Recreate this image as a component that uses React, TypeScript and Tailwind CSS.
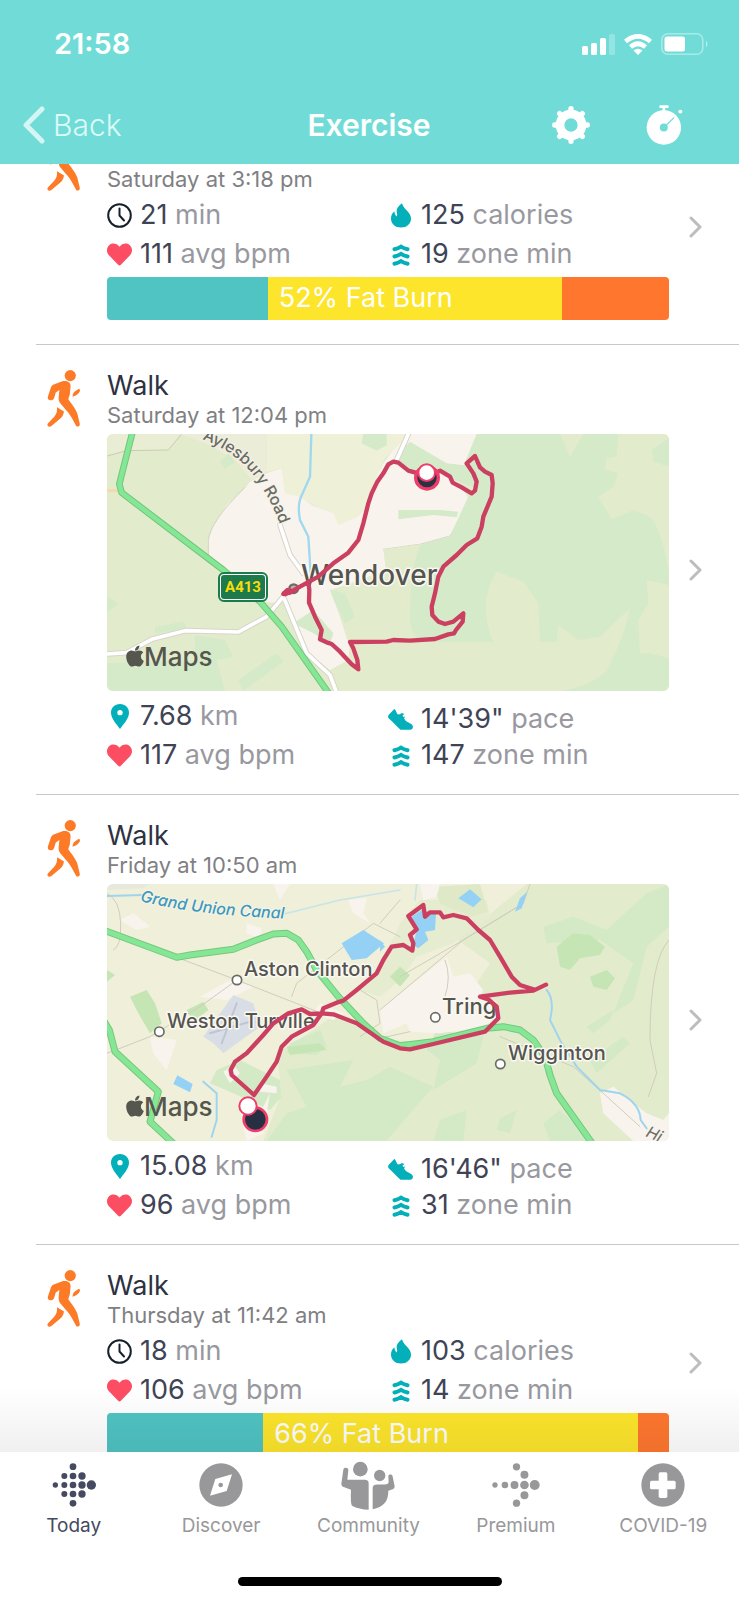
import React, { useLayoutEffect, useRef } from 'react';
import { FaApple, FaHeart } from 'react-icons/fa';

type Zone = { color: string; share: number; label?: string };

type Activity = {
  id: string;
  title: string;
  date: string;
  duration?: string;
  calories?: string;
  distance?: string;
  pace?: string;
  bpm: string;
  zoneMin: string;
  zones?: Zone[];
  map?: React.FC;
};

const Label: React.FC<{ x: number; y: number; size: number; children: string }> = ({ x, y, size, children }) => (
  <text
    x={x}
    y={y}
    fontSize={size}
    fontWeight={500}
    fill="#55554f"
    stroke="#faf8f2"
    strokeWidth={3}
    strokeLinejoin="round"
    paintOrder="stroke"
  >
    {children}
  </text>
);

const MapsMark = () => (
  <g fill="#55564e">
    <FaApple x={16} y={210} size={24} color="#55564e" />
    <text x={37} y={232} fontSize={26} fontWeight={500}>Maps</text>
  </g>
);

const WendoverMap: React.FC = () => (
  <svg viewBox="0 0 562 257" className="block h-auto w-full rounded-md" role="img" aria-label="Route around Wendover">
    <g transform="translate(-7 -4) scale(0.33333)" fill="none" strokeLinejoin="round" strokeLinecap="round">
      <path fill="#e3ebcd" d="M0 0H1720V800H0z" />
      <path fill="#e9edd3" d="M21 12H240L205 60 80 62 21 75z" />
      <path stroke="#c9ccb2" strokeWidth={3} d="M245 12 205 60 80 62 21 78" />
      <path fill="#eef0d8" d="M500 12H930L850 90 815 190 800 230 770 262 715 285 700 255 650 230 600 200 555 190 545 115 500 125z" />
      <path fill="#f1efdf" d="M240 12H500V125L455 150 410 95 330 45z" opacity={0.6} />
      <path fill="#d5eac8" d="M790 12H860V45L830 62 785 40zM385 70 405 95 375 118 360 95zM21 500 55 520 21 550z" />
      <path fill="#f8f4ed" d="M450 155 500 130 545 115 555 190 600 200 640 228 700 250 715 285 770 262 805 228 820 160 850 100 880 60 930 12H1130L1092 106 1045 108 1105 205 1080 260 1050 318 975 347 850 358 858 420 700 480 720 560 745 640 700 600 640 615 560 520 480 515 370 420 328 378 325 330 340 290 380 225 430 180z" />
      <path fill="#f8f4ed" d="M560 510 690 540 715 600 750 640 745 690 690 720 610 660z" />
      <path stroke="#d6d3c4" strokeWidth={3} d="M435 172Q330 275 325 330V380M850 358 965 342 1050 318 1080 270" />
      <path fill="#e3ebcd" d="M850 358 965 342 960 440 930 620 750 640 690 480 860 425zM750 636 1240 636 1240 783H765L775 700z" />
      <path fill="#d5eac8" d="M690 480 735 490 765 560 735 580 710 530zM580 580 640 540 700 610 690 640 640 610zM165 590 250 575 265 600 165 610zM285 615 375 630 400 680 350 690 375 783H21V700L285 690zM415 750 530 670 550 695 430 783z" />
      <path fill="#d5eac8" d="M930 35 1040 100 1092 106 1130 12H1707V783H1380Q1490 760 1520 720L1240 636H1000Q930 640 930 560 930 420 960 345L1050 318 1100 210 1120 170 1060 150 1020 120 950 130 880 95 905 60z" />
      <path fill="#d5eac8" d="M895 240H1020L1075 245 1070 262 1000 255 895 268z" />
      <path fill="#e3ebcd" d="M1380 12H1450L1410 80zM1555 12H1707V430Q1680 270 1640 255L1600 240 1535 268 1495 200 1540 170 1555 130 1515 120 1520 85 1550 80zM1190 425 1270 455 1315 520 1320 636H1370L1375 585 1435 630 1500 620 1590 535Q1570 630 1525 710 1480 770 1380 783H990L980 636 1180 636Q1130 520 1190 425zM1640 450 1707 465V685L1650 670 1620 670 1615 570 1645 520z" />
      <path fill="#d5eac8" d="M1655 60 1707 25V110L1660 95z" />
      <path stroke="#9fd8ef" strokeWidth={7} d="M634 12 630 140 608 190Q590 220 600 270L625 320 632 430" />
      <path stroke="#d8d5ca" strokeWidth={17} d="M21 672 80 668 155 628 255 602 415 606 500 560 550 500 620 670 690 735 708 783M540 285 570 375 610 430M925 12 890 90" />
      <path stroke="#fff" strokeWidth={11} d="M21 672 80 668 155 628 255 602 415 606 500 560 550 500 620 670 690 735 708 783M540 285 570 375 610 430M925 12 890 90" />
      <path stroke="#f3d9ae" strokeWidth={10} d="M21 182H55" />
      <path stroke="#74c57c" strokeWidth={20} d="M97 8 58 162 65 188 370 420 480 515 545 590 690 795" />
      <path stroke="#83e795" strokeWidth={14} d="M97 8 58 162 65 188 370 420 480 515 545 590 690 795" />
      <path stroke="#6b6b66" fill="#c9a8a8" strokeWidth={7} d="M568 476a13 13 0 1 0 26 0a13 13 0 1 0-26 0" />
    </g>
    <Label x={194} y={151} size={28}>Wendover</Label>
    <path id="aylesbury" fill="none" d="M95 5Q129 18 147 42T175 96" />
    <text fontSize={16} fontWeight={500} fill="#6b6b66" stroke="#f4f2e6" strokeWidth={2} paintOrder="stroke">
      <textPath href="#aylesbury">Aylesbury Road</textPath>
    </text>
    <rect x={112} y={139} width={48} height={28} rx={5} fill="#fff" stroke="#1d7a4a" strokeWidth={2} />
    <rect x={114} y={141} width={44} height={24} rx={3} fill="#1d7a4a" />
    <text x={136} y={158} fontSize={15} fontWeight={700} fill="#fbdc0c" textAnchor="middle" fontFamily="Roboto, sans-serif">A413</text>
    <MapsMark />
    <g transform="translate(-7 -4) scale(0.33333)" fill="none" strokeLinejoin="round" strokeLinecap="round">
      <path
        stroke="#cb4060"
        strokeWidth={13}
        d="M550 492 562 480 570 488 600 470 655 440 700 400 745 368 775 330 790 280 805 220 815 190 832 155 850 130 865 103 880 95 895 98 925 122 955 130 980 140 1020 122 1050 140 1058 158 1085 172 1115 190 1125 182 1130 155 1120 130 1100 100 1125 78 1140 112 1155 125 1175 135 1178 160 1175 200 1150 260 1145 290 1132 325 1100 345 1070 375 1030 410 1015 440 1005 490 995 530 997 555 1015 575 1035 582 1060 575 1090 550 1088 575 1068 600 1062 610 1045 613 1005 627 930 632 880 630 860 635 750 636 760 655 772 690 775 718 755 703 720 665 695 642 680 637 660 628 665 600 645 560 627 518 628 480 625 455"
      />
      <path stroke="#cb4060" strokeWidth={18} d="M556 490 570 484" />
      <circle cx={981} cy={143} r={34} fill="#2b3142" stroke="#ee3d6b" strokeWidth={10} />
      <circle cx={980} cy={128} r={25} fill="#fff" stroke="#ee3d6b" strokeWidth={6} />
    </g>
  </svg>
);

const TringMap: React.FC = () => (
  <svg viewBox="0 0 562 257" className="block h-auto w-full rounded-md" role="img" aria-label="Route around Tring">
    <g transform="translate(-7 -4) scale(0.33333)" fill="none" strokeLinejoin="round" strokeLinecap="round">
      <path fill="#f0f0da" d="M0 0H1720V800H0z" />
      <path fill="#e3ebcd" d="M1280 12H1707V783H490L545 640 530 520 640 450 700 405 860 480 1000 485 1160 440 1110 340 1170 250 1060 170 1160 110z" />
      <path fill="#e6ecd0" d="M900 130 960 60 1160 60 1170 110 1060 190 950 230 900 300 840 350 780 330 850 240z" />
      <path fill="#dfe9c8" d="M1000 20 1140 12 1165 95 1110 110 1020 70z" />
      <path fill="#d4e9c6" d="M570 490 660 450 680 500 650 525 560 520zM560 570 760 540 720 620 800 600 870 560 1000 620 930 700 860 783H500L560 700 620 680zM350 570 420 540 540 600 545 650 510 690 400 640 330 610zM1010 450 1150 470 1130 550 1000 630 1020 540 980 510zM1330 140 1420 110 1520 150 1640 40 1707 12V140L1640 200 1600 360 1540 400 1600 250 1500 180 1340 190zM860 660 940 620 910 700 860 720zM1200 715 1250 690 1230 760 1190 750zM1330 730 1380 690 1480 783H1350zM1020 720 1100 690 1090 783H1000zM1470 540 1570 470 1590 490 1490 580zM1460 440 1540 390 1530 420 1480 460z" />
      <path fill="#c5e5b5" d="M1370 200 1420 160 1470 165 1515 200 1500 225 1440 235 1410 270 1380 260zM90 350 140 330 165 370 185 430 150 460 115 400zM260 390 310 365 325 390 280 425zM870 290 900 260 930 285 900 320zM21 270 45 285 21 305zM560 500 660 490 680 510 570 525zM1470 290 1520 270 1545 295 1520 330 1480 320z" />
      <path fill="#f8f4ed" d="M840 390 1040 230 1060 290 1110 280 1150 330 1140 350 1200 400 1155 440 1020 460 930 455 920 430 850 460zM960 12H1020L1010 50 970 60zM745 60 800 55 790 100 810 130 760 100zM1500 640 1540 620 1640 700 1690 720 1707 700V783H1600L1510 700zM300 350 390 300 460 320 380 360zM400 555 420 580 390 610 370 575zM480 610 530 620 530 640 480 635zM150 470 230 480 200 570 160 520zM420 690 480 700 510 640 490 760 440 783zM440 130 485 145 480 175 440 160zM60 120 100 100 150 140 110 150zM660 370 730 400 700 420 640 400zM520 12H570L540 60z" />
      <path fill="#e2e5df" d="M21 12H150L130 25 21 30z" opacity={0.6} />
      <path fill="#d9dde6" d="M400 345 460 370 480 440 370 520 340 490 310 470z" />
      <path stroke="#bfc5d2" strokeWidth={6} d="M410 370 365 490M330 460 450 425" />
      <path stroke="#cfccbe" strokeWidth={3} d="M230 232 410 300 665 400M21 520 150 470 300 380 411 300M575 350 590 310 820 130 900 170M21 40Q60 60 62 130T40 210M840 390 1090 180 1270 70M900 290 1090 180 1270 70 1290 12M1035 240Q1055 290 1035 350M1707 180Q1650 240 1650 480L1670 580 1645 650M1200 470 1420 560 1510 640 1620 740M780 330 830 360 840 430 780 470M840 130 900 60M840 475 930 455" />
      <path stroke="#c6e4e8" strokeWidth={5} d="M540 105 720 60 900 30M950 12 945 60" />
      <path stroke="#9fd4ee" strokeWidth={6} d="M21 48 130 45M310 605 350 640V720L335 770M1340 330Q1365 360 1350 420L1385 490 1430 560 1500 630 1560 640Q1620 670 1622 720L1640 745" />
      <path fill="#94d1f5" d="M725 190 790 150 852 190 800 235 755 240 740 215zM232 586 278 612 270 637 220 612zM1075 55 1110 28 1145 58 1120 82zM935 110 965 90 1008 102 1005 150 975 155 985 180 955 205 940 195 950 148zM1245 95 1260 55 1282 35 1265 85zM840 180 855 200 840 215z" />
      <path stroke="#76c77d" strokeWidth={21} d="M10 150 230 232 270 225 400 208 470 180 520 162 560 160 595 180 620 215 650 270 715 350 790 430 840 475 900 497 1000 485 1160 445 1210 440 1260 450 1300 480 1335 530 1350 585 1370 640 1420 710 1480 795M10 420 28 450 45 515 175 635 150 725 225 795" />
      <path stroke="#85e796" strokeWidth={15} d="M10 150 230 232 270 225 400 208 470 180 520 162 560 160 595 180 620 215 650 270 715 350 790 430 840 475 900 497 1000 485 1160 445 1210 440 1260 450 1300 480 1335 530 1350 585 1370 640 1420 710 1480 795M10 420 28 450 45 515 175 635 150 725 225 795" />
      <g fill="#fff" stroke="#6b6b66" strokeWidth={5}>
        <circle cx={411} cy={300} r={14} />
        <circle cx={178} cy={455} r={14} />
        <circle cx={1006} cy={412} r={14} />
        <circle cx={1201} cy={552} r={14} />
      </g>
    </g>
    <Label x={137} y={92} size={20}>Aston Clinton</Label>
    <Label x={60} y={144} size={20}>Weston Turville</Label>
    <Label x={335} y={130} size={22}>Tring</Label>
    <Label x={401} y={176} size={20}>Wigginton</Label>
    <path id="canal" fill="none" d="M33 17Q90 32 190 35" />
    <text fontSize={16} fontStyle="italic" fontWeight={500} fill="#3e97bd" stroke="#f3f5e6" strokeWidth={2} paintOrder="stroke">
      <textPath href="#canal">Grand Union Canal</textPath>
    </text>
    <text x={538} y={252} fontSize={16} fontStyle="italic" fill="#6b6b66" stroke="#f8f4ed" strokeWidth={2} paintOrder="stroke" transform="rotate(24 538 252)">Hi</text>
    <MapsMark />
    <g transform="translate(-7 -4) scale(0.33333)" fill="none" strokeLinejoin="round" strokeLinecap="round">
      <path
        stroke="#cb4060"
        strokeWidth={13}
        d="M462 645 395 585 392 570 405 545 440 520 490 465 520 430 565 400 605 388 630 402 665 400 700 403 770 430 850 485 900 505 930 508 1000 492 1155 455 1195 415 1190 380 1165 358 1140 350 1230 338 1300 332 1338 314M1300 328 1260 315 1235 290 1200 230 1170 180 1135 150 1100 115 1060 105 1030 112 1020 97 990 97 975 110 970 75 925 108 950 148 930 165 940 190 937 212 910 195 875 200 850 240 830 280 800 305 770 330 730 362 710 368 670 385 665 400 640 435 575 470 545 500 530 545 500 590 462 645"
      />
      <circle cx={466} cy={718} r={35} fill="#273042" stroke="#ee3d6b" strokeWidth={8} />
      <circle cx={444} cy={678} r={26} fill="#fff" stroke="#ee3d6b" strokeWidth={6} />
    </g>
  </svg>
);

const WalkIcon = () => (
  <svg viewBox="52 388 99 173" className="h-[57px] w-[33px] shrink-0" fill="#fd7a26" aria-hidden="true">
    <circle cx="122" cy="405" r="17" />
    <path d="M62 480C56 480 53 477 54 469L63 442C65 436 68 433 74 431L98 422C112 419 124 425 123 438L121 458C121 464 118 470 116 477C125 490 140 508 144 522L151 552C151 562 140 562 138 554L126 532C117 515 98 498 91 488C87 482 86 476 87 468L89 449L78 456L73 473C71 478 68 480 62 480Z" />
    <path d="M82 501 103 514C101 526 97 531 91 536L64 559C56 563 50 557 54 550L74 529C81 521 82 514 82 501Z" />
    <path d="M129 469C129 460 133 454 139 451L147 446C152 445 153 452 149 456C144 462 137 467 129 469Z" />
  </svg>
);

const ClockIcon = () => (
  <svg viewBox="0 0 25 25" className="size-[25px]" fill="none" stroke="#16202b" strokeWidth="2" strokeLinecap="round" strokeLinejoin="round" aria-hidden="true">
    <circle cx="12.5" cy="12.5" r="11.3" />
    <path d="M12.5 5.5v7l4.5 5" />
  </svg>
);

const HeartIcon = () => <FaHeart className="size-[25px] text-[#fd4d63]" aria-hidden="true" />;

const FlameIcon = () => (
  <svg viewBox="65 127 60 74" className="h-[25px] w-5" fill="#03b0b9" aria-hidden="true">
    <path d="M98 127C103 147 125 152 125 173C125 190 112 200 95 200C78 200 65 190 65 173C65 163 69 156 75 151C76 158 78 163 82 167C85 162 83 158 82 152C81 140 91 133 98 127Z" />
  </svg>
);

const ZoneIcon = () => (
  <svg viewBox="70 248 54 67" className="h-[22px] w-[18px]" fill="none" stroke="#03b0b9" strokeWidth="12" strokeLinecap="round" aria-hidden="true">
    <path d="M77 264Q88 262 97 256Q106 262 117 264M77 286Q88 284 97 278Q106 284 117 286M77 308Q88 306 97 300Q106 306 117 308" />
  </svg>
);

const PinIcon = () => (
  <svg viewBox="242 39 54 75" className="h-[25px] w-[18px]" fill="#03b0b9" fillRule="evenodd" aria-hidden="true">
    <path d="M269 39C285 39 296 50 296 65C296 84 277 101 269 114C261 101 242 84 242 65C242 50 253 39 269 39ZM269 57A8 8 0 1 0 269 73A8 8 0 1 0 269 57Z" />
  </svg>
);

const ShoeIcon = () => (
  <svg viewBox="24 834 76 64" className="h-[21px] w-[25px]" fill="#03b0b9" aria-hidden="true">
    <path d="M43 834C46 834 49 843 52 849C56 852 62 850 66 846L74 849 68 854 71 858 76 857 73 863 77 869C84 876 98 878 100 887L99 893Q98 897 92 897H62C48 885 38 872 26 862Q22 857 27 851Z" />
  </svg>
);

const ChevronIcon = () => (
  <svg viewBox="0 0 13 22" className="h-[22px] w-[13px] shrink-0" fill="none" stroke="#bdbdbf" strokeWidth="3" strokeLinecap="round" strokeLinejoin="round" aria-hidden="true">
    <path d="M2 2l9 9-9 9" />
  </svg>
);

const Stat: React.FC<{ icon: React.ReactNode; value: string; unit: string; compact?: boolean }> = ({ icon, value, unit, compact }) => (
  <div className={`flex items-center gap-2 text-[27px] ${compact ? 'h-[34px]' : 'h-[39px]'}`}>
    <span className="flex w-[25px] justify-center">{icon}</span>
    <span className="whitespace-nowrap text-[#3f4356]">
      {value} <span className="text-[#98999f]">{unit}</span>
    </span>
  </div>
);

const ZoneBar: React.FC<{ zones: Zone[] }> = ({ zones }) => (
  <div className="mb-[5px] mt-[3px] flex h-[43px] overflow-hidden rounded">
    {zones.map((zone) => (
      <div
        key={zone.color}
        className="flex items-center whitespace-nowrap pl-[11px] text-[27px] text-white"
        style={{ backgroundColor: zone.color, width: `${zone.share}%` }}
      >
        {zone.label}
      </div>
    ))}
  </div>
);

const activities: Activity[] = [
  {
    id: 'sat-pm',
    title: 'Walk',
    date: 'Saturday at 3:18 pm',
    duration: '21',
    calories: '125',
    bpm: '111',
    zoneMin: '19',
    zones: [
      { color: '#50c3c3', share: 28.6 },
      { color: '#fde52b', share: 52.4, label: '52% Fat Burn' },
      { color: '#ff772f', share: 19 },
    ],
  },
  {
    id: 'sat-noon',
    title: 'Walk',
    date: 'Saturday at 12:04 pm',
    distance: '7.68',
    pace: `14'39"`,
    bpm: '117',
    zoneMin: '147',
    map: WendoverMap,
  },
  {
    id: 'fri',
    title: 'Walk',
    date: 'Friday at 10:50 am',
    distance: '15.08',
    pace: `16'46"`,
    bpm: '96',
    zoneMin: '31',
    map: TringMap,
  },
  {
    id: 'thu',
    title: 'Walk',
    date: 'Thursday at 11:42 am',
    duration: '18',
    calories: '103',
    bpm: '106',
    zoneMin: '14',
    zones: [
      { color: '#50c3c3', share: 27.8 },
      { color: '#fde52b', share: 66.6, label: '66% Fat Burn' },
      { color: '#ff772f', share: 5.6 },
    ],
  },
];

const ActivityRow: React.FC<{ activity: Activity }> = ({ activity }) => {
  const RouteMap = activity.map;

  return (
    <li className="ml-9 border-t border-[#c8c8ca]">
      <a href={`#${activity.id}`} className="flex items-center pl-[11px] pr-[37px]">
        <div className="self-start pt-[25px]">
          <WalkIcon />
        </div>
        <div className="ml-[27px] flex-1 pb-[19px] pt-[25px]">
          <h2 className="text-[27px] leading-8 text-[#2d3142]">{activity.title}</h2>
          <p className="pb-0.5 text-[22px] leading-[26px] text-[#808083]">{activity.date}</p>
          {RouteMap && (
            <div className="mt-1 pb-1.5">
              <RouteMap />
            </div>
          )}
          <div className={`grid grid-cols-2 items-end ${RouteMap ? '' : 'pt-0.5'}`}>
            <div>
              {activity.duration && <Stat icon={<ClockIcon />} value={activity.duration} unit="min" />}
              {activity.distance && <Stat icon={<PinIcon />} value={activity.distance} unit="km" />}
              <Stat icon={<HeartIcon />} value={activity.bpm} unit="avg bpm" />
            </div>
            <div>
              {activity.calories && <Stat icon={<FlameIcon />} value={activity.calories} unit="calories" />}
              {activity.pace && <Stat icon={<ShoeIcon />} value={activity.pace} unit="pace" compact />}
              <Stat icon={<ZoneIcon />} value={activity.zoneMin} unit="zone min" />
            </div>
          </div>
          {activity.zones && <ZoneBar zones={activity.zones} />}
        </div>
        <span className="ml-5">
          <ChevronIcon />
        </span>
      </a>
    </li>
  );
};

const StatusBar = () => (
  <div className="flex h-[88px] items-center justify-between pl-[54px] pr-[30px]">
    <span className="text-[29px] font-semibold">21:58</span>
    <div className="flex items-center gap-[9px]">
      <svg viewBox="0 0 33 21" className="h-[21px] w-[33px]" fill="#fff" aria-hidden="true">
        <rect y="12" width="6" height="9" rx="1.5" />
        <rect x="9" y="9" width="6" height="12" rx="1.5" />
        <rect x="18" y="4" width="6" height="17" rx="1.5" />
        <rect x="27" width="6" height="21" rx="1.5" opacity="0.25" />
      </svg>
      <svg viewBox="0 0 28 21" className="h-[21px] w-7" fill="none" stroke="#fff" strokeWidth="4.6" aria-hidden="true">
        <path d="M1.5 7.5Q14-3 26.5 7.5M6.5 13Q14 6.5 21.5 13" />
        <path d="M14 21 9.5 16.5Q14 13 18.5 16.5Z" fill="#fff" stroke="none" />
      </svg>
      <svg viewBox="0 0 48 22" className="h-[22px] w-12" aria-hidden="true">
        <rect x="0.8" y="0.8" width="41" height="20.4" rx="6" fill="none" stroke="#fff" strokeWidth="1.6" opacity="0.4" />
        <rect x="3.5" y="3.5" width="20.5" height="15" rx="2.5" fill="#fff" />
        <path d="M45 7.5Q48 11 45 14.5Z" fill="#fff" opacity="0.5" />
      </svg>
    </div>
  </div>
);

const GearIcon = () => (
  <svg viewBox="-57 -57 114 114" className="size-[38px]" fill="none" stroke="#fff" aria-hidden="true">
    <circle r="33" strokeWidth="26" />
    <path
      strokeWidth="16"
      strokeLinecap="round"
      d="M0-41V-49M0 41V49M-41 0H-49M41 0H49M31-31L34-34M-31-31L-34-34M31 31L34 34M-31 31L-34 34"
    />
  </svg>
);

const StopwatchIcon = () => (
  <svg viewBox="830 314 110 121" className="h-10 w-[37px]" aria-hidden="true">
    <circle cx="883" cy="382" r="52" fill="#fff" />
    <path d="M873 319H894M883 319V335" stroke="#fff" strokeWidth="8" strokeLinecap="round" />
    <circle cx="883" cy="382" r="12" fill="#71dcd7" />
    <path d="M886 379 913 353" stroke="#71dcd7" strokeWidth="4" strokeLinecap="round" />
    <circle cx="933" cy="334" r="6" fill="#fff" />
  </svg>
);

const TodayIcon = () => (
  <svg viewBox="150 665 138 138" className="size-[46px]" fill="currentColor" aria-hidden="true">
    <circle cx="163" cy="734" r="8" />
    <circle cx="190" cy="707" r="9" />
    <circle cx="190" cy="734" r="9" />
    <circle cx="190" cy="761" r="9" />
    <circle cx="216" cy="679" r="10" />
    <circle cx="216" cy="707" r="10" />
    <circle cx="216" cy="734" r="10" />
    <circle cx="216" cy="761" r="10" />
    <circle cx="216" cy="789" r="10" />
    <circle cx="243" cy="707" r="11" />
    <circle cx="243" cy="734" r="11" />
    <circle cx="243" cy="761" r="11" />
    <circle cx="271" cy="734" r="14" />
  </svg>
);

const DiscoverIcon = () => (
  <svg viewBox="598 665 138 138" className="size-[46px]" fill="currentColor" aria-hidden="true">
    <circle cx="667" cy="734" r="65" />
    <path fill="#fff" d="M700 702 684 752 634 766 650 716Z" />
    <circle cx="666" cy="734" r="7" />
  </svg>
);

const CommunityIcon = () => (
  <svg viewBox="36 24 162 146" className="h-[49px] w-[54px]" fill="currentColor" aria-hidden="true">
    <circle cx="94" cy="48" r="22" />
    <path d="M43 50C44 42 58 42 58 51L55 80H108Q119 80 119 91V170Q90 169 69 158Q64 152 66 110L42 101Q37 99 37 92Z" />
    <circle cx="152" cy="67" r="17" />
    <path d="M131 168V104Q132 94 145 94H166Q180 94 179 85L178 70C178 62 190 62 191 70L197 100Q197 106 191 108L178 113Q179 160 131 168Z" />
  </svg>
);

const PremiumIcon = () => (
  <svg viewBox="368 665 145 138" className="h-[46px] w-12" fill="currentColor" aria-hidden="true">
    <circle cx="377" cy="734" r="8" />
    <circle cx="407" cy="734" r="10" />
    <circle cx="436" cy="734" r="12" />
    <circle cx="466" cy="734" r="13" />
    <circle cx="497" cy="734" r="15" />
    <circle cx="466" cy="703" r="12" />
    <circle cx="442" cy="679" r="11" />
    <circle cx="466" cy="765" r="12" />
    <circle cx="442" cy="789" r="11" />
  </svg>
);

const CovidIcon = () => (
  <svg viewBox="816 665 138 138" className="size-[46px]" fill="currentColor" aria-hidden="true">
    <circle cx="885" cy="734" r="65" />
    <rect x="872" y="696" width="26" height="77" rx="5" fill="#fff" />
    <rect x="846" y="721" width="77" height="26" rx="5" fill="#fff" />
  </svg>
);

const tabs = [
  { name: 'Today', Icon: TodayIcon, active: true },
  { name: 'Discover', Icon: DiscoverIcon },
  { name: 'Community', Icon: CommunityIcon },
  { name: 'Premium', Icon: PremiumIcon },
  { name: 'COVID-19', Icon: CovidIcon },
];

const App: React.FC = () => {
  const listRef = useRef<HTMLElement>(null);

  useLayoutEffect(() => {
    // open with the newest entry partly scrolled under the header
    if (listRef.current) listRef.current.scrollTop = 56;
  }, []);

  return (
    <div className="flex h-screen flex-col bg-white font-['Inter',sans-serif]">
      <header className="shrink-0 bg-[#71dcd7] text-white">
        <StatusBar />
        <div className="grid h-[76px] grid-cols-[1fr_auto_1fr] items-center pb-0.5 pl-[23px] pr-14">
          <button type="button" className="flex items-center gap-2 justify-self-start text-[30px] font-light text-[#dbfaf8]">
            <svg viewBox="0 0 22 38" className="h-[38px] w-[22px]" fill="none" stroke="#d3f5f3" strokeWidth="5" strokeLinecap="round" strokeLinejoin="round" aria-hidden="true">
              <path d="M19 3 3 19l16 16" />
            </svg>
            Back
          </button>
          <h1 className="pl-8 text-[30px] font-semibold">Exercise</h1>
          <div className="flex items-center gap-14 justify-self-end">
            <button type="button" aria-label="Settings">
              <GearIcon />
            </button>
            <button type="button" aria-label="Start timer">
              <StopwatchIcon />
            </button>
          </div>
        </div>
      </header>

      <div className="relative min-h-0 flex-1">
        <main ref={listRef} className="h-full overflow-y-auto [scrollbar-width:none]">
          <ul>
            {activities.map((activity) => (
              <ActivityRow key={activity.id} activity={activity} />
            ))}
          </ul>
        </main>
        <div className="pointer-events-none absolute inset-x-0 bottom-0 h-16 bg-linear-to-t from-black/6 to-transparent" />
      </div>

      <footer className="flex h-[148px] shrink-0 flex-col items-center bg-white pb-[14px]">
        <nav className="grid w-full grid-cols-5 pr-0.5 pt-2">
          {tabs.map(({ name, Icon, active }) => (
            <a key={name} href={`#${name}`} className={`flex flex-col items-center ${active ? 'text-[#454a60]' : 'text-[#98989a]'}`}>
              <span className="flex h-[50px] items-center">
                <Icon />
              </span>
              <span className="mt-1 text-[19px] leading-6">{name}</span>
            </a>
          ))}
        </nav>
        <div className="mt-auto h-[9px] w-[264px] rounded-full bg-black" />
      </footer>
    </div>
  );
};

export default App;
